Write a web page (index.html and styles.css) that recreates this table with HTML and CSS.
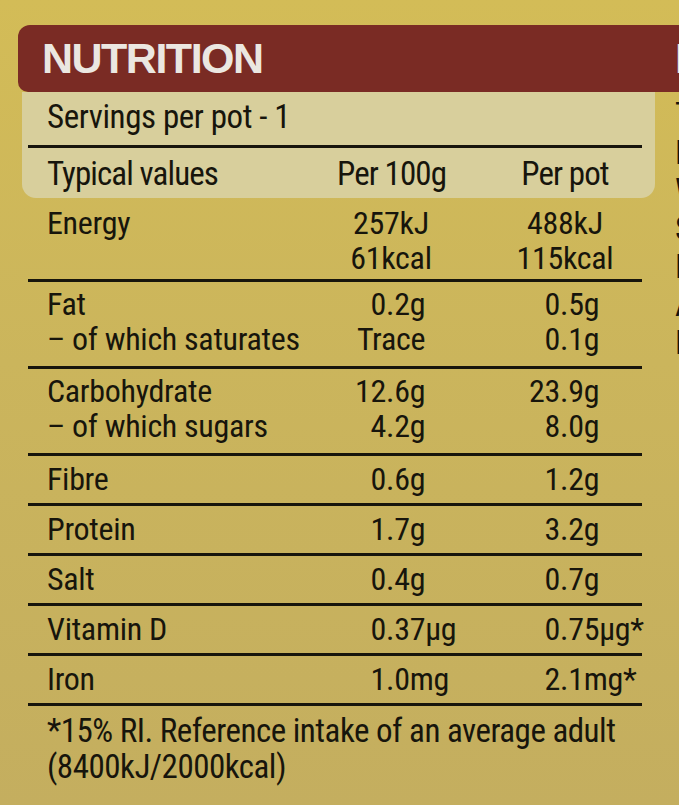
FILE: index.html
```html
<!DOCTYPE html>
<html lang="en">
<head>
<meta charset="utf-8">
<title>Nutrition</title>
<link rel="stylesheet" href="styles.css">
</head>
<body>
<div class="sheet">
  <div class="band">
    <h1 class="band-title">NUTRITION</h1>
    <span class="band-title next-title">INGREDIENTS</span>
  </div>

  <div class="nutri">
    <div class="panel">
      <div class="serv">Servings per pot - 1</div>
      <div class="row head">
        <div class="lab">Typical values</div>
        <div class="c2"><span class="ctr">Per 100g</span></div>
        <div class="c3"><span class="ctr">Per pot</span></div>
      </div>
    </div>

    <div class="table">
      <div class="row trow dbl first">
        <div class="lab">Energy</div>
        <div class="c2"><span class="ctr">257kJ<br>61kcal</span></div>
        <div class="c3"><span class="ctr">488kJ<br>115kcal</span></div>
      </div>
      <div class="row trow dbl">
        <div class="lab">Fat<br>– of which saturates</div>
        <div class="c2"><span class="i">0</span>.2g<br><span class="ctr">Trace</span></div>
        <div class="c3"><span class="i">0</span>.5g<br><span class="i">0</span>.1g</div>
      </div>
      <div class="row trow dbl">
        <div class="lab">Carbohydrate<br>– of which sugars</div>
        <div class="c2"><span class="i">12</span>.6g<br><span class="i">4</span>.2g</div>
        <div class="c3"><span class="i">23</span>.9g<br><span class="i">8</span>.0g</div>
      </div>
      <div class="row trow">
        <div class="lab">Fibre</div>
        <div class="c2"><span class="i">0</span>.6g</div>
        <div class="c3"><span class="i">1</span>.2g</div>
      </div>
      <div class="row trow">
        <div class="lab">Protein</div>
        <div class="c2"><span class="i">1</span>.7g</div>
        <div class="c3"><span class="i">3</span>.2g</div>
      </div>
      <div class="row trow">
        <div class="lab">Salt</div>
        <div class="c2"><span class="i">0</span>.4g</div>
        <div class="c3"><span class="i">0</span>.7g</div>
      </div>
      <div class="row trow">
        <div class="lab">Vitamin D</div>
        <div class="c2"><span class="i">0</span>.37µg</div>
        <div class="c3"><span class="i">0</span>.75µg*</div>
      </div>
      <div class="row trow">
        <div class="lab">Iron</div>
        <div class="c2"><span class="i">1</span>.0mg</div>
        <div class="c3"><span class="i">2</span>.1mg*</div>
      </div>
      <p class="foot">*15% RI. Reference intake of an average adult<br>(8400kJ/2000kcal)</p>
    </div>
  </div>

  <div class="ingr">
    <div>Tomatoes (39%),</div>
    <div>Potato,</div>
    <div>Water, Onion,</div>
    <div>Sweetcorn,</div>
    <div>Lentils,</div>
    <div>Apple juice,</div>
    <div>Rice flour,</div>
  </div>
</div>
</body>
</html>
```

FILE: styles.css
```css
html, body {
  margin: 0;
  padding: 0;
}

body {
  width: 679px;
  height: 805px;
  overflow: hidden;
  background: linear-gradient(180deg, #d3bc57 0%, #cbb55c 45%, #c4ae5f 100%);
  color: #17150c;
  font-family: "Roboto Condensed", "Liberation Sans", Arial, sans-serif;
  font-weight: 420;
}

.sheet {
  display: grid;
  grid-template-columns: 639px 400px;
  column-gap: 18px;
  padding: 25px 0 0 18px;
  width: 1100px;
}

.band {
  grid-column: 1 / -1;
  display: grid;
  grid-template-columns: 639px 400px;
  column-gap: 18px;
  height: 67px;
  align-items: center;
  background: #7a2b24;
  border-radius: 12px 0 0 10px;
}

.band-title {
  margin: 0;
  padding-left: 24px;
  font-family: "Liberation Sans", Arial, sans-serif;
  font-weight: bold;
  font-size: 43px;
  line-height: 67px;
  letter-spacing: -1.5px;
  color: #ebe7e1;
}

.next-title {
  padding-left: 0;
}

.nutri {
  grid-column: 1;
  padding: 0 2px 0 4px;
}

.panel {
  background: #d8cf9c;
  border-radius: 0 0 14px 14px;
  padding: 6px 13px 5px 6px;
}

.serv {
  font-size: 33px;
  line-height: 38px;
  letter-spacing: -0.4px;
  padding: 0 0 9px 19px;
  border-bottom: 3px solid #17150c;
  white-space: nowrap;
}

.row {
  display: grid;
  grid-template-columns: 290px 150px 1fr;
  padding-left: 19px;
}

.head {
  font-size: 33px;
  line-height: 38px;
  letter-spacing: -0.9px;
  padding-top: 7px;
  white-space: nowrap;
}

.c2 .ctr {
  display: inline-block;
  width: 108px;
  text-align: center;
}

.c3 .ctr {
  display: inline-block;
  width: 156px;
  text-align: center;
}

.c2 .i {
  display: inline-block;
  width: 49px;
  text-align: right;
}

.c3 .i {
  display: inline-block;
  width: 73px;
  text-align: right;
}

.table {
  margin: 0 13px 0 6px;
}

.trow {
  font-size: 32px;
  line-height: 35px;
  letter-spacing: -0.3px;
  padding-top: 6px;
  padding-bottom: 6px;
  border-bottom: 3px solid #17150c;
  white-space: nowrap;
}

.trow.dbl {
  padding-top: 5px;
  padding-bottom: 9px;
}

.trow.first {
  padding-top: 8px;
  padding-bottom: 3px;
}

.foot {
  margin: 0;
  font-size: 33px;
  line-height: 36px;
  letter-spacing: -0.5px;
  padding: 7px 0 0 19px;
  white-space: nowrap;
}

.ingr {
  grid-column: 2;
  grid-row: 2;
  font-size: 33px;
  line-height: 38px;
  padding-top: 4px;
  white-space: nowrap;
}
```
